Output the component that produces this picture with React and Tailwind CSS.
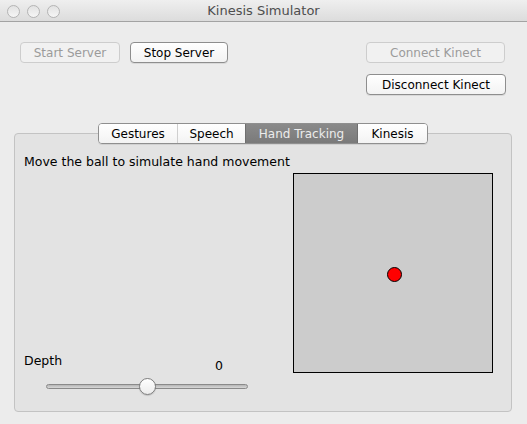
import React from "react";

const font = { fontFamily: '"DejaVu Sans", "Liberation Sans", sans-serif' };

function Btn({ children, disabled, className = "" }) {
  return (
    <div
      className={
        "flex h-[21px] items-center justify-center rounded-[4px] border text-[12px] leading-none " +
        (disabled
          ? "border-[#cdcdcd] bg-[#f1f1f1] text-[#9b9b9b] "
          : "border-[#8e8e8e] bg-gradient-to-b from-white to-[#f3f3f3] text-black shadow-[0_1px_0_rgba(0,0,0,0.08)] ") +
        className
      }
    >
      {children}
    </div>
  );
}

function Light() {
  return <div className="h-[13px] w-[13px] rounded-full border border-[#b4b4b4] bg-gradient-to-b from-[#e2e2e2] to-[#f6f6f6]" />;
}

export default function App() {
  return (
    <div style={font} className="flex h-[424px] w-[527px] flex-col overflow-hidden bg-[#ececec]">
      {/* title bar */}
      <div className="relative flex h-[22px] shrink-0 items-center border-b border-[#a3a3a3] bg-gradient-to-b from-[#efefef] to-[#dcdcdc]">
        <div className="flex gap-[7px] pl-[7px] pt-[1px]">
          <Light />
          <Light />
          <Light />
        </div>
        <div className="absolute inset-x-0 top-0 flex h-[21px] items-center justify-center text-[13px] text-[#4e4e4e]">
          Kinesis Simulator
        </div>
      </div>

      {/* buttons */}
      <div className="mt-[20px] flex justify-between pl-[20px] pr-[21px]">
        <div className="flex gap-[10px]">
          <Btn disabled className="w-[100px]">Start Server</Btn>
          <Btn className="w-[98px]">Stop Server</Btn>
        </div>
        <div className="flex flex-col gap-[11px]">
          <Btn disabled className="w-[139px]">Connect Kinect</Btn>
          <Btn className="w-[140px]">Disconnect Kinect</Btn>
        </div>
      </div>

      {/* tab group box */}
      <div className="ml-[14px] mt-[38px] flex h-[279px] w-[498px] flex-col rounded-[4px] border border-[#c3c3c3] bg-[#e3e3e3]">
        <div className="-mt-[11px] flex justify-center">
          <div className="flex h-[21px] overflow-hidden rounded-[4px] border border-[#8f8f8f] text-[12px] leading-none shadow-[0_1px_0_rgba(0,0,0,0.08)]">
            <div className="flex w-[79px] items-center justify-center border-r border-[#cfcfcf] bg-gradient-to-b from-white to-[#f3f3f3] text-black">Gestures</div>
            <div className="flex w-[67px] items-center justify-center bg-gradient-to-b from-white to-[#f3f3f3] text-black">Speech</div>
            <div className="flex w-[113px] items-center justify-center border-x border-[#6f6f6f] bg-gradient-to-b from-[#8a8a8a] to-[#7a7a7a] text-[#ececec]">Hand Tracking</div>
            <div className="flex w-[69px] items-center justify-center bg-gradient-to-b from-white to-[#f3f3f3] text-black">Kinesis</div>
          </div>
        </div>

        <div className="flex flex-1 pl-[9px] pr-[18px] pb-[16px]">
          <div className="flex flex-1 flex-col">
            <div className="mt-[10px] text-[12.5px] leading-[16px] text-black">Move the ball to simulate hand movement</div>
            <div className="mt-auto flex items-start">
              <div className="w-[185px] text-[12.5px] leading-[16px] text-black">Depth</div>
              <div className="mt-[5px] w-[20px] text-center text-[12.5px] leading-[16px] text-black">0</div>
            </div>
            <div className="relative ml-[22px] mt-[4px] flex h-[17px] w-[202px] items-center">
              <div className="h-[5px] w-full rounded-full border border-[#8a8a8a] bg-gradient-to-b from-[#b5b5b5] to-[#d8d8d8]" />
              <div className="absolute left-[93px] top-0 h-[17px] w-[17px] rounded-full border border-[#7d7d7d] bg-gradient-to-b from-white to-[#ececec] shadow-[0_1px_1px_rgba(0,0,0,0.15)]" />
            </div>
          </div>
          <div className="relative mt-[29px] h-[200px] w-[200px] shrink-0 border border-black bg-[#cccccc]">
            <div className="absolute left-[93px] top-[93px] h-[15px] w-[15px] rounded-full border border-black bg-[#ff0000]" />
          </div>
        </div>
      </div>
    </div>
  );
}
